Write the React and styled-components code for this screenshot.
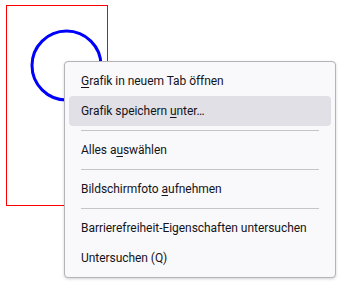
import React from 'react';
import styled, { createGlobalStyle } from 'styled-components';

const Global = createGlobalStyle`
  html, body { margin: 0; padding: 0; background: #fff; }
  body { width: 342px; height: 288px; overflow: hidden; }
`

const Page = styled.div`
  position: relative;
  width: 342px;
  height: 288px;
  font-family: Roboto, Lato, "Noto Sans", sans-serif;
`

const Drawing = styled.svg`
  display: block;
`

const Menu = styled.ul`
  position: absolute;
  left: 64px;
  top: 61px;
  width: 262px;
  margin: 0;
  padding: 4px;
  list-style: none;
  background: #f9f9fb;
  border: 1px solid #b4b4b8;
  border-radius: 4px;
  box-shadow: 0 1px 3px rgba(0, 0, 0, 0.18);
`

const Item = styled.li`
  height: 30px;
  display: flex;
  align-items: center;
  padding: 0 12px;
  border-radius: 4px;
  font-size: 12px;
  letter-spacing: -0.05px;
  color: #15141a;
  white-space: nowrap;
  font-variant-ligatures: none;
  background: ${props => props.active ? '#e0e0e6' : 'transparent'};
`

const Key = styled.span`
  text-decoration: underline;
  text-underline-offset: 2px;
`

const Separator = styled.li`
  height: 1px;
  margin: 4px 12px;
  background: #c5c5c9;
`

const Label = ({ text, accessKey }) => {
  if (accessKey == null) return <span>{text}</span>
  return (
    <span>
      {text.slice(0, accessKey)}
      <Key>{text[accessKey]}</Key>
      {text.slice(accessKey + 1)}
    </span>
  )
}

const entries = [
  { text: 'Grafik in neuem Tab öffnen', key: 0 },
  { text: 'Grafik speichern unter…', key: 17, active: true },
  'sep',
  { text: 'Alles auswählen', key: 7 },
  'sep',
  { text: 'Bildschirmfoto aufnehmen', key: 15 },
  'sep',
  { text: 'Barrierefreiheit-Eigenschaften untersuchen' },
  { text: 'Untersuchen (Q)' },
]

export default function App() {
  return (
    <Page>
      <Global />
      <Drawing width="342" height="288">
        <rect x="6.5" y="5.5" width="101" height="200" fill="none" stroke="#ff0000" strokeWidth="1" />
        <circle cx="66.5" cy="65.5" r="34.5" fill="none" stroke="#0000ff" strokeWidth="3" />
      </Drawing>
      <Menu>
        {entries.map((e, i) =>
          e === 'sep'
            ? <Separator key={i} />
            : <Item key={i} active={e.active}><Label text={e.text} accessKey={e.key} /></Item>
        )}
      </Menu>
    </Page>
  )
}
